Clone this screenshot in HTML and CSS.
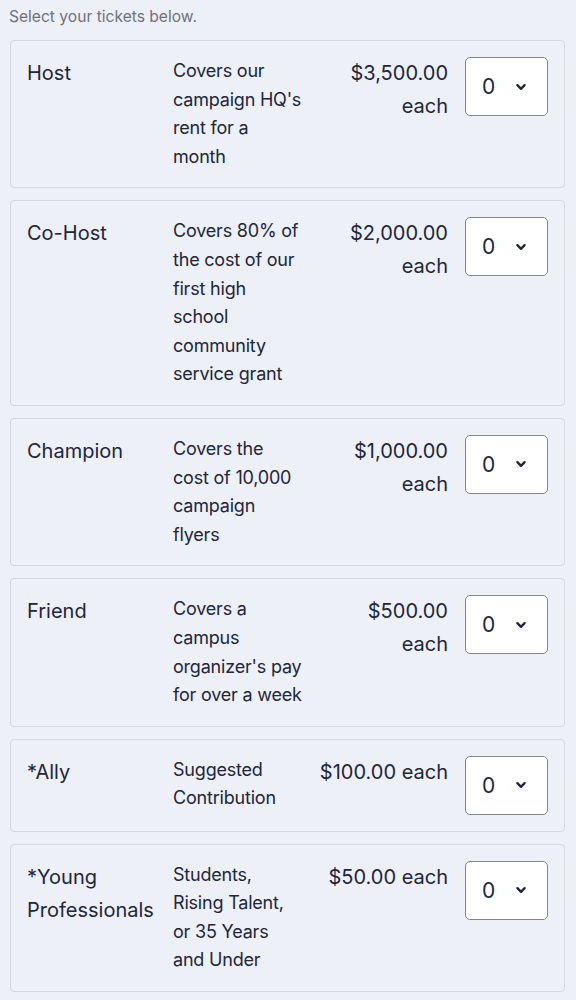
FILE: index.html
```html
<!DOCTYPE html>
<html lang="en">
<head>
<meta charset="utf-8">
<title>Tickets</title>
<link rel="stylesheet" href="styles.css">
</head>
<body>
<div class="page">
  <p class="intro">Select your tickets below.</p>
  <div class="tickets">
    <div class="ticket">
      <div class="name">Host</div>
      <div class="desc">Covers our<br>campaign HQ's<br>rent for a<br>month</div>
      <div class="price">$3,500.00 each</div>
      <div class="qty"><span>0</span><svg viewBox="0 0 10 8" class="chev"><path d="M2 2.5 L5 5.5 L8 2.5"/></svg></div>
    </div>
    <div class="ticket">
      <div class="name">Co-Host</div>
      <div class="desc">Covers 80% of<br>the cost of our<br>first high<br>school<br>community<br>service grant</div>
      <div class="price">$2,000.00 each</div>
      <div class="qty"><span>0</span><svg viewBox="0 0 10 8" class="chev"><path d="M2 2.5 L5 5.5 L8 2.5"/></svg></div>
    </div>
    <div class="ticket">
      <div class="name">Champion</div>
      <div class="desc">Covers the<br>cost of 10,000<br>campaign<br>flyers</div>
      <div class="price">$1,000.00 each</div>
      <div class="qty"><span>0</span><svg viewBox="0 0 10 8" class="chev"><path d="M2 2.5 L5 5.5 L8 2.5"/></svg></div>
    </div>
    <div class="ticket">
      <div class="name">Friend</div>
      <div class="desc">Covers a<br>campus<br>organizer's pay<br>for over a week</div>
      <div class="price">$500.00 each</div>
      <div class="qty"><span>0</span><svg viewBox="0 0 10 8" class="chev"><path d="M2 2.5 L5 5.5 L8 2.5"/></svg></div>
    </div>
    <div class="ticket">
      <div class="name">*Ally</div>
      <div class="desc">Suggested<br>Contribution</div>
      <div class="price">$100.00 each</div>
      <div class="qty"><span>0</span><svg viewBox="0 0 10 8" class="chev"><path d="M2 2.5 L5 5.5 L8 2.5"/></svg></div>
    </div>
    <div class="ticket">
      <div class="name">*Young Professionals</div>
      <div class="desc">Students,<br>Rising Talent,<br>or 35 Years<br>and Under</div>
      <div class="price">$50.00 each</div>
      <div class="qty"><span>0</span><svg viewBox="0 0 10 8" class="chev"><path d="M2 2.5 L5 5.5 L8 2.5"/></svg></div>
    </div>
  </div>
</div>
</body>
</html>
```
FILE: styles.css
```css
html, body {
  margin: 0;
  padding: 0;
  background: #edf0f6;
}
body {
  font-family: Inter, "Noto Sans", sans-serif;
  color: #22263a;
}
.page {
  padding: 0 11px 0 10px;
}
.intro {
  margin: 0 0 0 -1px;
  padding-top: 6px;
  height: 40px;
  box-sizing: border-box;
  font-size: 15.6px;
  line-height: 22px;
  color: #6d7282;
}
.tickets {
  display: flex;
  flex-direction: column;
  gap: 12px;
}
.ticket {
  display: grid;
  grid-template-columns: 129px 129px 129px 83px;
  column-gap: 17px;
  align-items: start;
  padding: 16px;
  border: 1px solid #d2d7e0;
  border-radius: 4px;
  background: #edf0f6;
}
.name {
  font-size: 20px;
  line-height: 33px;
}
.desc {
  font-size: 18px;
  line-height: 28.6px;
  letter-spacing: -0.2px;
  white-space: nowrap;
}
.price {
  font-size: 20px;
  line-height: 33px;
  text-align: right;
}
.qty {
  height: 59px;
  box-sizing: border-box;
  background: #fff;
  border: 1.5px solid #80858f;
  border-radius: 5px;
  display: flex;
  align-items: center;
  padding-left: 16px;
  font-size: 21px;
}
.chev {
  width: 12px;
  height: 10px;
  margin-left: 20px;
  fill: none;
  stroke: #22263a;
  stroke-width: 2;
  stroke-linecap: round;
  stroke-linejoin: round;
}
```
